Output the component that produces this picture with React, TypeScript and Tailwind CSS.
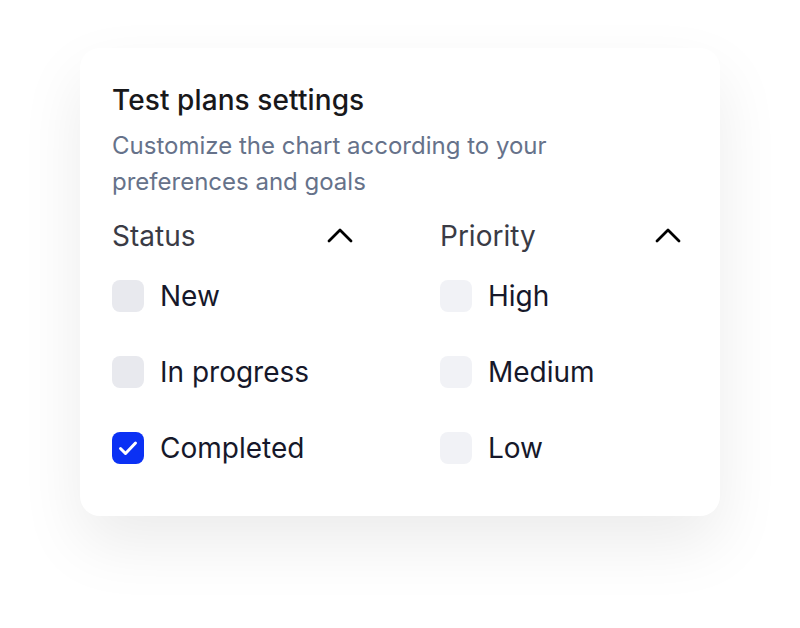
import React from 'react';

type Option = { label: string; checked?: boolean };

const ChevronUp = () => (
  <svg width="32" height="32" viewBox="0 0 32 32" fill="none">
    <path
      d="M5 21L16 10L27 21"
      stroke="#000"
      strokeWidth="2.8"
      strokeLinecap="round"
      strokeLinejoin="round"
    />
  </svg>
);

const Checkbox = ({ checked, tone }: { checked?: boolean; tone: 'dark' | 'light' }) => {
  if (checked) {
    return (
      <div className="flex h-8 w-8 shrink-0 items-center justify-center rounded-lg bg-[#0b31f4]">
        <svg width="32" height="32" viewBox="0 0 32 32" fill="none">
          <path
            d="M8.5 16.5L13.5 21.5L23.5 11"
            stroke="#fff"
            strokeWidth="3"
            strokeLinecap="round"
            strokeLinejoin="round"
          />
        </svg>
      </div>
    );
  }
  return (
    <div
      className={`h-8 w-8 shrink-0 rounded-lg ${tone === 'dark' ? 'bg-[#e8e9ee]' : 'bg-[#f1f2f6]'}`}
    />
  );
};

const FilterGroup = ({
  title,
  options,
  tone,
}: {
  title: string;
  options: Option[];
  tone: 'dark' | 'light';
}) => (
  <div className="flex flex-col">
    {/* Group header */}
    <div className="flex h-10 items-center justify-between">
      <span className="text-[28px] leading-10 text-[#3a3b45]">{title}</span>
      <ChevronUp />
    </div>

    <div className="mt-6 flex flex-col gap-[44px]">
      {options.map((o) => (
        <label key={o.label} className="flex h-8 cursor-pointer items-center gap-4">
          <Checkbox checked={o.checked} tone={tone} />
          <span className="text-[28px] leading-8 text-[#16182a]">{o.label}</span>
        </label>
      ))}
    </div>
  </div>
);

export default function App() {
  const status: Option[] = [
    { label: 'New' },
    { label: 'In progress' },
    { label: 'Completed', checked: true },
  ];
  const priority: Option[] = [{ label: 'High' }, { label: 'Medium' }, { label: 'Low' }];

  return (
    <div className="flex h-[628px] w-[800px] justify-center bg-white pt-12 font-['Inter','Noto_Sans',sans-serif]">
      <div className="h-fit w-[640px] rounded-[20px] bg-white px-8 pb-[52px] pt-8 shadow-[0_28px_64px_rgba(0,0,0,0.08)]">
        <h1 className="text-[28px] font-medium leading-10 tracking-[0.1px] text-[#18181b]">
          Test plans settings
        </h1>
        <p className="mt-2 w-[470px] text-[24px] leading-9 text-[#66728a]">
          Customize the chart according to your preferences and goals
        </p>

        <div className="mt-4 grid grid-cols-[244px_244px] gap-x-[84px]">
          <FilterGroup title="Status" options={status} tone="dark" />
          <FilterGroup title="Priority" options={priority} tone="light" />
        </div>
      </div>
    </div>
  );
}
